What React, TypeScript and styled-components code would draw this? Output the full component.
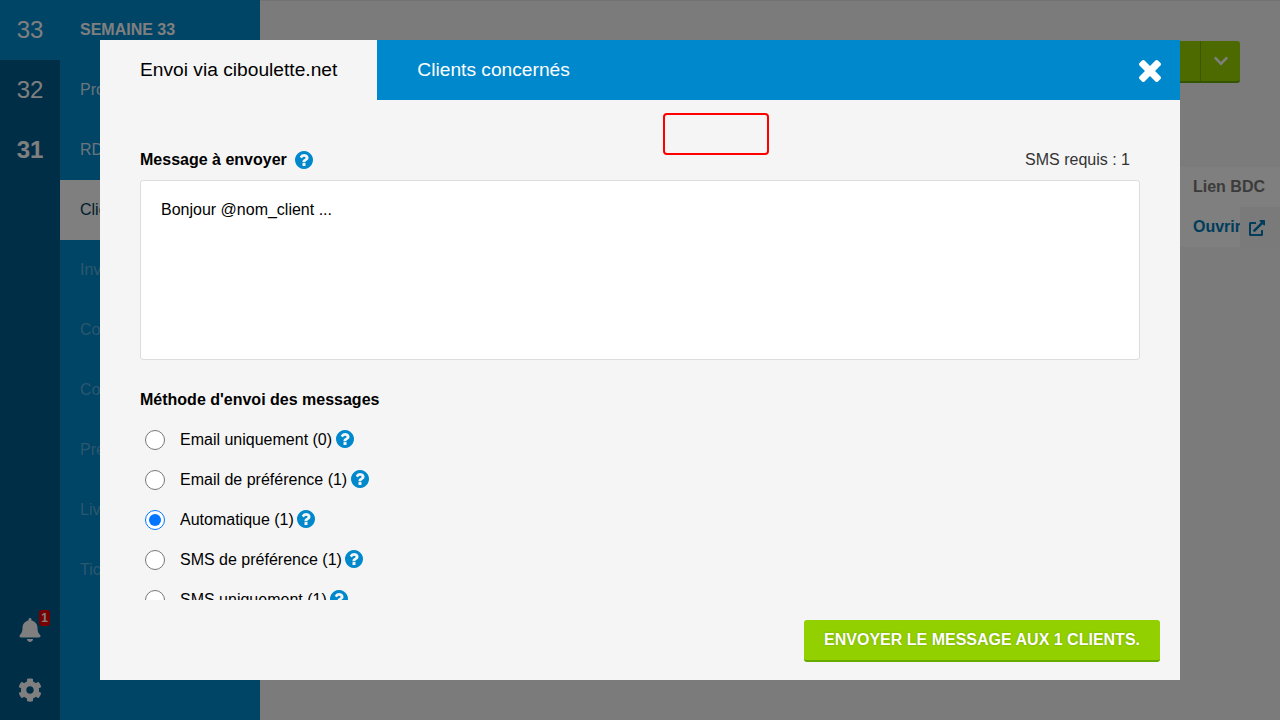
import React from 'react';
import styled, { createGlobalStyle } from 'styled-components';
import { FaBell, FaChevronDown, FaCog, FaExternalLinkAlt } from 'react-icons/fa';

const GlobalStyle = createGlobalStyle`
  html, body {
    margin: 0;
    height: 100%;
    overflow: hidden;
    font-family: "Liberation Sans", Arial, sans-serif;
  }
  #root {
    height: 100%;
  }
`;

const Page = styled.div`
  display: flex;
  width: 1280px;
  height: 720px;
  background-color: #f6f6f6;
  overflow: hidden;
`;

const WeekRail = styled.nav`
  display: flex;
  flex-direction: column;
  width: 60px;
  background-color: #005c8f;
`;

const WeekItem = styled.div<{ $current?: boolean; $bold?: boolean }>`
  display: flex;
  align-items: center;
  justify-content: center;
  height: 60px;
  font-size: 24px;
  font-weight: ${props => (props.$bold ? 700 : 400)};
  color: #fff;
  background-color: ${props => (props.$current ? '#0088cc' : 'transparent')};
`;

const RailFooter = styled.div`
  display: flex;
  flex-direction: column;
  margin-top: auto;
`;

const RailButton = styled.div`
  position: relative;
  display: flex;
  align-items: center;
  justify-content: center;
  height: 60px;
  font-size: 24px;
  color: #fff;
`;

const Badge = styled.span`
  position: absolute;
  top: 10px;
  left: 39px;
  width: 11px;
  height: 16px;
  border-radius: 3px;
  background-color: #f00000;
  color: #fff;
  font-size: 12px;
  font-weight: 700;
  line-height: 16px;
  text-align: center;
`;

const SideMenu = styled.nav`
  display: flex;
  flex-direction: column;
  width: 200px;
  background-color: #0088cc;
`;

const MenuTitle = styled.div`
  display: flex;
  align-items: center;
  height: 60px;
  padding-left: 20px;
  color: #fff;
  font-size: 16px;
  font-weight: 700;
`;

const MenuItem = styled.div<{ $active?: boolean; $disabled?: boolean }>`
  display: flex;
  align-items: center;
  height: 60px;
  padding-left: 20px;
  font-size: 16px;
  background-color: ${props => (props.$active ? '#fff' : 'transparent')};
  color: ${props =>
    props.$active ? '#003d5c' : props.$disabled ? 'rgba(255, 255, 255, 0.35)' : 'rgba(255, 255, 255, 0.85)'};
`;

const Main = styled.main`
  display: flex;
  flex: 1;
  flex-direction: column;
  border-top: 1px solid #e4e4e4;
`;

const Toolbar = styled.div`
  display: flex;
  justify-content: flex-end;
  padding: 40px 40px 0 0;
`;

const SplitButton = styled.div`
  display: flex;
  box-sizing: border-box;
  height: 42px;
  border-bottom: 2px solid #66aa00;
  border-radius: 3px;
  background-color: #98d400;
  color: #fff;
`;

const SplitLabel = styled.div`
  width: 120px;
  border-right: 1px solid #77b000;
`;

const SplitCaret = styled.div`
  display: flex;
  align-items: center;
  justify-content: center;
  width: 39px;
  font-size: 16px;
`;

const Table = styled.div`
  display: flex;
  flex-direction: column;
  margin-top: 84px;
`;

const HeaderRow = styled.div`
  display: flex;
  align-items: center;
  justify-content: flex-end;
  height: 40px;
  background-color: #fff;
  color: #777;
  font-size: 16px;
  font-weight: 700;
`;

const HeaderCell = styled.div`
  width: 87px;
`;

const BodyRow = styled.div`
  display: flex;
  align-items: center;
  justify-content: flex-end;
  height: 40px;
  background-color: #fff;
  color: #007ab8;
  font-size: 16px;
  font-weight: 700;
`;

const LinkCell = styled.div`
  width: 47px;
  white-space: nowrap;
`;

const IconCell = styled.div`
  display: flex;
  align-items: center;
  box-sizing: border-box;
  width: 40px;
  height: 40px;
  padding: 2px 0 0 9px;
  background-color: #f4f4f4;
  font-size: 16px;
`;

const Overlay = styled.div`
  position: fixed;
  inset: 0;
  display: flex;
  align-items: center;
  justify-content: center;
  background-color: rgba(0, 0, 0, 0.5);
`;

const Modal = styled.section`
  display: flex;
  flex-direction: column;
  width: 1080px;
  height: 640px;
  background-color: #f5f5f5;
`;

const ModalTabs = styled.header`
  display: flex;
  flex-shrink: 0;
  align-items: stretch;
  height: 60px;
  background-color: #0088cc;
`;

const Tab = styled.div<{ $active?: boolean }>`
  display: flex;
  align-items: center;
  padding: 0 40px;
  font-size: 19.2px;
  color: ${props => (props.$active ? '#000' : '#fff')};
  background-color: ${props => (props.$active ? '#f5f5f5' : 'transparent')};
`;

const CloseButton = styled.button`
  display: flex;
  align-items: center;
  justify-content: center;
  width: 60px;
  margin-left: auto;
  padding: 2px 0 0;
  border: 0;
  background: none;
  color: #fff;
`;

const CloseGlyph = styled.svg`
  display: block;
  width: 22px;
  height: 22px;
  fill: currentColor;
`;

const ModalBody = styled.div`
  position: relative;
  flex: 1;
  min-height: 0;
  padding: 50px 40px 0;
  overflow: hidden;
`;

const HighlightBox = styled.div`
  position: absolute;
  top: 13px;
  left: 563px;
  width: 106px;
  height: 42px;
  box-sizing: border-box;
  border: 2px solid #f00;
  border-radius: 4px;
`;

const FieldHeader = styled.div`
  display: flex;
  align-items: center;
  justify-content: space-between;
  height: 20px;
  padding-right: 10px;
  margin-bottom: 10px;
`;

const FieldLabel = styled.div`
  display: flex;
  align-items: center;
  gap: 8px;
  color: #000;
  font-size: 16px;
  font-weight: 700;
`;

const Counter = styled.span`
  color: #333;
  font-size: 16px;
`;

const MessageBox = styled.div`
  box-sizing: border-box;
  height: 180px;
  padding: 20px;
  border: 1px solid #ddd;
  border-radius: 3px;
  background-color: #fff;
  color: #000;
  font-size: 16px;
  line-height: 18px;
`;

const SectionLabel = styled.div`
  margin-top: 30px;
  color: #000;
  font-size: 16px;
  font-weight: 700;
  line-height: 20px;
`;

const RadioList = styled.div`
  display: flex;
  flex-direction: column;
  margin-top: 10px;
`;

const RadioRow = styled.label`
  display: flex;
  align-items: center;
  flex-shrink: 0;
  height: 40px;
  color: #000;
  font-size: 16px;
`;

const RadioInput = styled.input`
  width: 20px;
  height: 20px;
  margin: 0 15px 0 5px;
`;

const HelpGlyph = styled.svg<{ $inRow?: boolean }>`
  display: block;
  flex-shrink: 0;
  width: 18px;
  height: 18px;
  margin: ${props => (props.$inRow ? '-2px 0 0 3.5px' : '-1px 0 0')};
  fill: #0088cc;
`;

const ModalFooter = styled.footer`
  display: flex;
  flex-shrink: 0;
  justify-content: flex-end;
  height: 80px;
  padding: 20px 20px 0 0;
  box-sizing: border-box;
`;

const SendButton = styled.button`
  height: 42px;
  padding: 0 20px;
  border: 0;
  border-bottom: 2px solid #66aa00;
  border-radius: 3px;
  background-color: #92d000;
  color: #fff;
  font-family: inherit;
  font-size: 16px;
  font-weight: 700;
  text-shadow: 0 0 2px rgba(0, 0, 0, 0.25);
`;

const HelpIcon: React.FC<{ inRow?: boolean }> = ({ inRow }) => (
  <HelpGlyph $inRow={inRow} viewBox="128 128 1536 1536" aria-hidden="true">
    <path d="M1024 1376v-192q0-14-9-23t-23-9h-192q-14 0-23 9t-9 23v192q0 14 9 23t23 9h192q14 0 23-9t9-23zm256-672q0-88-55.500-163t-138.500-116-170-41q-243 0-371 213-15 24 8 42l132 100q7 6 19 6 16 0 25-12 53-68 86-92 34-24 86-24 48 0 85.500 26t37.500 59q0 38-20 61t-68 45q-63 28-115.500 86.500t-52.500 125.500v36q0 14 9 23t23 9h192q14 0 23-9t9-23q0-19 21.500-49.500t54.500-49.500q32-18 49-28.500t46-35 44.500-48 28-60.500 12.500-81zm384 192q0 209-103 385.500t-279.500 279.500-385.500 103-385.500-103-279.500-279.500-103-385.500 103-385.500 279.500-279.500 385.500-103 385.500 103 279.500 279.500 103 385.500z" />
  </HelpGlyph>
);

const menuItems = [
  { label: 'Produits' },
  { label: 'RDV' },
  { label: 'Clients', active: true },
  { label: 'Inventaire', disabled: true },
  { label: 'Commandes', disabled: true },
  { label: 'Comptes', disabled: true },
  { label: 'Préparation', disabled: true },
  { label: 'Livraisons', disabled: true },
  { label: 'Tickets', disabled: true },
];

const methods = [
  { label: 'Email uniquement (0)' },
  { label: 'Email de préférence (1)' },
  { label: 'Automatique (1)', checked: true },
  { label: 'SMS de préférence (1)' },
  { label: 'SMS uniquement (1)' },
];

const App: React.FC = () => (
  <>
    <GlobalStyle />
    <Page>
      <WeekRail>
        <WeekItem $current>33</WeekItem>
        <WeekItem>32</WeekItem>
        <WeekItem $bold>31</WeekItem>
        <RailFooter>
          <RailButton>
            <FaBell />
            <Badge>1</Badge>
          </RailButton>
          <RailButton>
            <FaCog />
          </RailButton>
        </RailFooter>
      </WeekRail>
      <SideMenu>
        <MenuTitle>SEMAINE 33</MenuTitle>
        {menuItems.map(item => (
          <MenuItem key={item.label} $active={item.active} $disabled={item.disabled}>
            {item.label}
          </MenuItem>
        ))}
      </SideMenu>
      <Main>
        <Toolbar>
          <SplitButton>
            <SplitLabel />
            <SplitCaret>
              <FaChevronDown />
            </SplitCaret>
          </SplitButton>
        </Toolbar>
        <Table>
          <HeaderRow>
            <HeaderCell>Lien BDC</HeaderCell>
          </HeaderRow>
          <BodyRow>
            <LinkCell>Ouvrir</LinkCell>
            <IconCell>
              <FaExternalLinkAlt />
            </IconCell>
          </BodyRow>
        </Table>
      </Main>
    </Page>
    <Overlay>
      <Modal>
        <ModalTabs>
          <Tab $active>Envoi via ciboulette.net</Tab>
          <Tab>Clients concernés</Tab>
          <CloseButton type="button" aria-label="Fermer">
            <CloseGlyph viewBox="302 366 1188 1188" aria-hidden="true">
              <path d="M1490 1322q0 40-28 68l-136 136q-28 28-68 28t-68-28l-294-294-294 294q-28 28-68 28t-68-28l-136-136q-28-28-28-68t28-68l294-294-294-294q-28-28-28-68t28-68l136-136q28-28 68-28t68 28l294 294 294-294q28-28 68-28t68 28l136 136q28 28 28 68t-28 68l-294 294 294 294q28 28 28 68z" />
            </CloseGlyph>
          </CloseButton>
        </ModalTabs>
        <ModalBody>
          <HighlightBox />
          <FieldHeader>
            <FieldLabel>
              Message à envoyer
              <HelpIcon />
            </FieldLabel>
            <Counter>SMS requis : 1</Counter>
          </FieldHeader>
          <MessageBox>Bonjour @nom_client ...</MessageBox>
          <SectionLabel>Méthode d'envoi des messages</SectionLabel>
          <RadioList>
            {methods.map(method => (
              <RadioRow key={method.label}>
                <RadioInput type="radio" name="method" defaultChecked={method.checked} />
                {method.label}
                <HelpIcon inRow />
              </RadioRow>
            ))}
          </RadioList>
        </ModalBody>
        <ModalFooter>
          <SendButton type="button">ENVOYER LE MESSAGE AUX 1 CLIENTS.</SendButton>
        </ModalFooter>
      </Modal>
    </Overlay>
  </>
);

export default App;
